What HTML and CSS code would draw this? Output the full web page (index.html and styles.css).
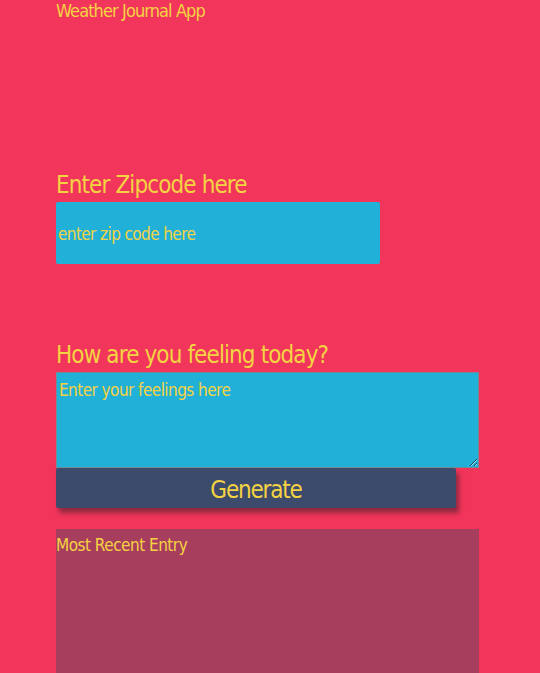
FILE: index.html
```html
<!DOCTYPE html>
<html lang="en">
<head>
<meta charset="utf-8">
<title>Weather Journal App</title>
<link rel="stylesheet" href="styles.css">
</head>
<body>
<main class="app">
  <header class="app-title">Weather Journal App</header>
  <section class="zip">
    <label class="label" for="zip">Enter Zipcode here</label>
    <input class="zip-input" id="zip" type="text" placeholder="enter zip code here">
  </section>
  <section class="feelings">
    <label class="label" for="feelings">How are you feeling today?</label>
    <textarea class="feel-input" id="feelings" placeholder="Enter your feelings here"></textarea>
    <button class="generate" type="button">Generate</button>
  </section>
  <section class="entry">
    <div class="entry-title">Most Recent Entry</div>
  </section>
</main>
</body>
</html>
```
FILE: styles.css
```css
html, body {
  margin: 0;
  padding: 0;
  background: #f2355a;
}
body {
  font-family: "DejaVu Sans Condensed", "Liberation Sans", sans-serif;
  color: #f4d343;
}
.app {
  display: flex;
  flex-direction: column;
  padding-left: 56px;
}
.app-title {
  font-size: 18px;
  letter-spacing: -0.9px;
  line-height: 21px;
  height: 17px;
  margin: 0;
}
.zip {
  margin-top: 152px;
  display: flex;
  flex-direction: column;
}
.label {
  font-size: 24px;
  letter-spacing: -0.9px;
  line-height: 33px;
}
.zip-input {
  box-sizing: border-box;
  width: 324px;
  height: 62px;
  margin: 0;
  border: none;
  border-radius: 2px;
  background: #21b0d8;
  padding: 2px 2px 0;
  font-family: inherit;
  font-size: 17px;
  letter-spacing: -0.6px;
  color: #f4d343;
  outline: none;
}
.zip-input::placeholder,
.feel-input::placeholder {
  color: #f4d343;
  opacity: 1;
}
.feelings {
  margin-top: 75px;
  display: flex;
  flex-direction: column;
  align-items: flex-start;
}
.feel-input {
  box-sizing: border-box;
  width: 423px;
  height: 96px;
  margin: 0;
  border: 1px solid #6f8c98;
  background: #21b0d8;
  padding: 4px 2px;
  font-family: inherit;
  font-size: 17px;
  letter-spacing: -0.55px;
  line-height: 26px;
  color: #f4d343;
  outline: none;
}
.generate {
  width: 400px;
  height: 40px;
  margin: 0;
  border: none;
  border-radius: 2px;
  background: #3c4a6c;
  box-shadow: 3px 5px 5px rgba(60, 30, 40, 0.55);
  font-family: inherit;
  font-size: 24px;
  letter-spacing: -1.2px;
  line-height: 40px;
  color: #f4d343;
  padding: 2px 0 0;
}
.entry {
  margin-top: 21px;
  width: 423px;
  height: 160px;
  background: #a83e5e;
}
.entry-title {
  font-size: 17px;
  letter-spacing: -0.5px;
  line-height: 32px;
}
```
